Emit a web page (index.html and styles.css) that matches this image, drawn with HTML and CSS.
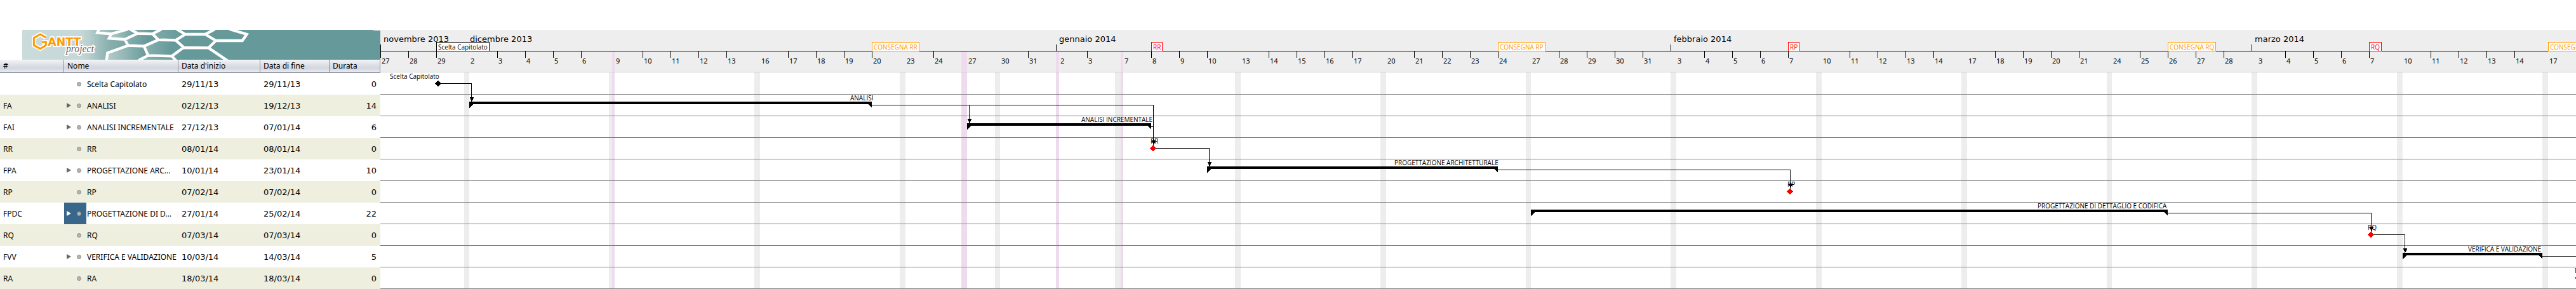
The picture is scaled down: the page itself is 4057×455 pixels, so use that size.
FILE: index.html
```html
<!DOCTYPE html>
<html lang="it">
<head>
<meta charset="utf-8">
<title>GanttProject</title>
<link rel="stylesheet" href="styles.css">
</head>
<body>
<main class="gantt">
  <section class="tasks">
    <svg class="banner" viewBox="105 21 1692 141" preserveAspectRatio="xMinYMin slice" role="img" aria-label="GanttProject">
      <defs>
        <linearGradient id="fade" gradientUnits="userSpaceOnUse" x1="105" y1="0" x2="860" y2="0">
          <stop offset="0" stop-color="#c9dbda"/>
          <stop offset=".42" stop-color="#c5d8d7"/>
          <stop offset=".62" stop-color="#9dbdbc"/>
          <stop offset="1" stop-color="#669999"/>
        </linearGradient>
        <linearGradient id="edge" gradientUnits="userSpaceOnUse" x1="380" y1="0" x2="530" y2="0">
          <stop offset="0" stop-color="#5f9493" stop-opacity="0"/>
          <stop offset="1" stop-color="#5f9493" stop-opacity=".5"/>
        </linearGradient>
        <linearGradient id="cell" x1="0" y1="0" x2="1" y2="0">
          <stop offset="0" stop-color="#b4cdcc"/>
          <stop offset="1" stop-color="#669999"/>
        </linearGradient>
        <linearGradient id="cell2" x1="0" y1="0" x2="1" y2="0">
          <stop offset="0" stop-color="#8ab1b0"/>
          <stop offset=".7" stop-color="#669999"/>
        </linearGradient>
      </defs>
      <rect x="105" y="21" width="1692" height="141" fill="url(#fade)"/>
      <rect x="860" y="21" width="937" height="141" fill="#669999"/>
      <path d="M380 21H465L460 36L525 40L515 62L590 66L605 95L510 130L505 162H380z" fill="url(#edge)"/>
      <path d="M465 21H605L525 40L460 36z" fill="url(#cell)"/>
      <path d="M525 40L600 21L650 38L590 66L515 62z" fill="url(#cell)"/>
      <path d="M605 95L680 98L700 142L660 162H505L510 130z" fill="url(#cell)"/>
      <path d="M590 66L650 38L720 40L748 68L680 98L605 95z" fill="url(#cell2)"/>
      <path d="M620 21H760L720 40L650 38z" fill="url(#cell2)"/>
      <path d="M680 98L748 68L830 70L870 104L805 145L700 142z" fill="url(#cell2)"/>
      <g class="mesh">
        <path d="M468 18L460 35L525 40L605 18M525 40L515 61L590 66L650 38L615 18M650 38L720 40L762 18M720 40L748 68L830 70L868 104L812 145L700 142L680 98L748 68M590 66L605 95L680 98M605 95L508 130L503 165M700 142L655 165M830 70L875 42L835 18M875 42L970 42L1015 18M970 42L1020 72L1145 72L1166 42L1085 18M1020 72L985 106L865 105M985 106L1075 167M812 145L832 167"/>
      </g>
      <path d="M1755 21H1797V24H1772z" fill="#fff"/>
      <path class="mark-halo" d="M217 57L190 42L160 59V94L190 110L217 94V79H198"/>
      <path class="mark" d="M217 57L190 42L160 59V94L190 110L217 94V79H198"/>
      <text class="logo-name" x="226" y="95">ANTT</text>
      <text class="logo-sub" x="312" y="127">project</text>
    </svg>
    <table class="grid">
      <colgroup><col class="c-id"><col class="c-name"><col class="c-start"><col class="c-end"><col class="c-len"></colgroup>
      <thead>
        <tr><th scope="col">#</th><th scope="col">Nome</th><th scope="col">Data d'inizio</th><th scope="col">Data di fine</th><th scope="col">Durata</th></tr>
      </thead>
      <tbody>
        <tr><td></td><td class="name"><div class="node"><span class="tree"><i class="dot"></i></span>Scelta Capitolato</div></td><td class="date">29/11/13</td><td class="date">29/11/13</td><td class="num">0</td></tr>
        <tr><td>FA</td><td class="name"><div class="node"><span class="tree"><button class="toggle" aria-label="Espandi"></button><i class="dot"></i></span>ANALISI</div></td><td class="date">02/12/13</td><td class="date">19/12/13</td><td class="num">14</td></tr>
        <tr><td>FAI</td><td class="name"><div class="node"><span class="tree"><button class="toggle" aria-label="Espandi"></button><i class="dot"></i></span>ANALISI INCREMENTALE</div></td><td class="date">27/12/13</td><td class="date">07/01/14</td><td class="num">6</td></tr>
        <tr><td>RR</td><td class="name"><div class="node"><span class="tree"><i class="dot"></i></span>RR</div></td><td class="date">08/01/14</td><td class="date">08/01/14</td><td class="num">0</td></tr>
        <tr><td>FPA</td><td class="name"><div class="node"><span class="tree"><button class="toggle" aria-label="Espandi"></button><i class="dot"></i></span>PROGETTAZIONE ARC...</div></td><td class="date">10/01/14</td><td class="date">23/01/14</td><td class="num">10</td></tr>
        <tr><td>RP</td><td class="name"><div class="node"><span class="tree"><i class="dot"></i></span>RP</div></td><td class="date">07/02/14</td><td class="date">07/02/14</td><td class="num">0</td></tr>
        <tr><td>FPDC</td><td class="name"><div class="node"><span class="tree selected"><button class="toggle" aria-label="Espandi"></button><i class="dot"></i></span>PROGETTAZIONE DI D...</div></td><td class="date">27/01/14</td><td class="date">25/02/14</td><td class="num">22</td></tr>
        <tr><td>RQ</td><td class="name"><div class="node"><span class="tree"><i class="dot"></i></span>RQ</div></td><td class="date">07/03/14</td><td class="date">07/03/14</td><td class="num">0</td></tr>
        <tr><td>FVV</td><td class="name"><div class="node"><span class="tree"><button class="toggle" aria-label="Espandi"></button><i class="dot"></i></span>VERIFICA E VALIDAZIONE</div></td><td class="date">10/03/14</td><td class="date">14/03/14</td><td class="num">5</td></tr>
        <tr><td>RA</td><td class="name"><div class="node"><span class="tree"><i class="dot"></i></span>RA</div></td><td class="date">18/03/14</td><td class="date">18/03/14</td><td class="num">0</td></tr>
      </tbody>
    </table>
  </section>

  <section class="chart">
    <header class="scale">
      <div class="months">
        <span class="month" style="width:136px">novembre 2013</span>
        <span class="month" style="width:928px">dicembre 2013</span>
        <span class="month" style="width:968px">gennaio 2014</span>
        <span class="month" style="width:915px">febbraio 2014</span>
        <span class="month">marzo 2014</span>
        <span class="flag" style="left:88px">Scelta Capitolato</span>
        <span class="flag due" style="left:774px">CONSEGNA RR</span>
        <span class="flag review" style="left:1214px">RR</span>
        <span class="flag due" style="left:1760px">CONSEGNA RP</span>
        <span class="flag review" style="left:2217px">RP</span>
        <span class="flag due" style="left:2815px">CONSEGNA RQ</span>
        <span class="flag review" style="left:3132px">RQ</span>
        <span class="flag due" style="left:3414px">CONSEGNA RA</span>
      </div>
      <div class="days">
        <span class="day">27</span><span class="day">28</span><span class="day">29</span><i class="off short"></i>
        <span class="day">2</span><span class="day">3</span><span class="day">4</span><span class="day">5</span><span class="day">6</span><i class="off half"></i>
        <span class="day">9</span><span class="day">10</span><span class="day">11</span><span class="day">12</span><span class="day">13</span><i class="off"></i>
        <span class="day">16</span><span class="day">17</span><span class="day">18</span><span class="day">19</span><span class="day">20</span><i class="off"></i>
        <span class="day">23</span><span class="day">24</span><i class="off holiday"></i>
        <span class="day">27</span><i class="off short"></i>
        <span class="day">30</span><span class="day">31</span><i class="off single"></i>
        <span class="day">2</span><span class="day">3</span><i class="off long"></i>
        <span class="day">7</span><span class="day">8</span><span class="day">9</span><span class="day">10</span><i class="off"></i>
        <span class="day">13</span><span class="day">14</span><span class="day">15</span><span class="day">16</span><span class="day">17</span><i class="off"></i>
        <span class="day">20</span><span class="day">21</span><span class="day">22</span><span class="day">23</span><span class="day">24</span><i class="off short"></i>
        <span class="day">27</span><span class="day">28</span><span class="day">29</span><span class="day">30</span><span class="day">31</span><i class="off"></i>
        <span class="day">3</span><span class="day">4</span><span class="day">5</span><span class="day">6</span><span class="day">7</span><i class="off"></i>
        <span class="day">10</span><span class="day">11</span><span class="day">12</span><span class="day">13</span><span class="day">14</span><i class="off"></i>
        <span class="day">17</span><span class="day">18</span><span class="day">19</span><span class="day">20</span><span class="day">21</span><i class="off short"></i>
        <span class="day">24</span><span class="day">25</span><span class="day">26</span><span class="day">27</span><span class="day">28</span><i class="off"></i>
        <span class="day">3</span><span class="day">4</span><span class="day">5</span><span class="day">6</span><span class="day">7</span><i class="off"></i>
        <span class="day">10</span><span class="day">11</span><span class="day">12</span><span class="day">13</span><span class="day">14</span><i class="off"></i>
        <span class="day">17</span>
      </div>
    </header>
    <div class="plot">
      <svg class="layer" aria-hidden="true">
        <g transform="translate(-599 0)" fill="#ededed">
          <rect x="731" width="8" height="100%"/><rect x="959" width="5" height="100%"/>
          <rect x="1188" width="9" height="100%"/><rect x="1417" width="9" height="100%"/>
          <rect x="1567" width="8" height="100%"/><rect x="1756" width="9" height="100%"/>
          <rect x="1945" width="9" height="100%"/><rect x="2174" width="9" height="100%"/>
          <rect x="2403" width="8" height="100%"/><rect x="2631" width="9" height="100%"/>
          <rect x="2860" width="9" height="100%"/><rect x="3089" width="9" height="100%"/>
          <rect x="3318" width="8" height="100%"/><rect x="3546" width="9" height="100%"/>
          <rect x="3775" width="9" height="100%"/><rect x="4004" width="9" height="100%"/>
          <g fill="#eedcee">
            <rect x="964" width="4" height="100%"/><rect x="1514" width="9" height="100%"/>
            <rect x="1663" width="5" height="100%"/><rect x="1765" width="4" height="100%"/>
          </g>
        </g>
      </svg>
      <div class="row"><span class="label" style="left:15px">Scelta Capitolato</span></div>
      <div class="row"><span class="label" style="left:740px">ANALISI</span></div>
      <div class="row"><span class="label" style="left:1104px">ANALISI INCREMENTALE</span></div>
      <div class="row"><span class="label" style="left:1213px">RR</span></div>
      <div class="row"><span class="label" style="left:1597px">PROGETTAZIONE ARCHITETTURALE</span></div>
      <div class="row"><span class="label" style="left:2216px">RP</span></div>
      <div class="row"><span class="label" style="left:2610px">PROGETTAZIONE DI DETTAGLIO E CODIFICA</span></div>
      <div class="row"><span class="label" style="left:3130px">RQ</span></div>
      <div class="row"><span class="label" style="left:3288px">VERIFICA E VALIDAZIONE</span></div>
      <div class="row"><span class="label" style="left:3456px">RA</span></div>
      <svg class="layer" shape-rendering="crispEdges" aria-hidden="true">
        <defs>
          <path id="arrow" d="M-3 0H3V2H2V4H1V6H-1V4H-2V2H-3z"/>
          <path id="stone" d="M0 -5L5 0L0 5L-5 0z"/>
        </defs>
        <g transform="translate(-599 -114)">
          <g class="link">
            <path d="M690 131.5H742.5V160"/>
            <path d="M1373 165.5H1816.5V230M1526.5 165V194"/>
            <path d="M1813 199.5H1816"/>
            <path d="M1816 233.5H1904.5V262"/>
            <path d="M2359 267.5H2819.5V298"/>
            <path d="M3414 335.5H3734.5V366"/>
            <path d="M3734 369.5H3787.5V398"/>
            <path d="M4004 403.5H4060V432"/>
          </g>
          <use href="#arrow" x="742.5" y="153"/><use href="#arrow" x="1526.5" y="187"/>
          <use href="#arrow" x="1816.5" y="221"/><use href="#arrow" x="1904.5" y="255"/>
          <use href="#arrow" x="2819.5" y="289"/><use href="#arrow" x="3734.5" y="357"/>
          <use href="#arrow" x="3787.5" y="391"/>
          <path d="M739 160H1373V170L1367 164H745L739 170z"/>
          <path d="M1523 194H1813V204L1807 198H1529L1523 204z"/>
          <path d="M1901 262H2359V272L2353 266H1907L1901 272z"/>
          <path d="M2411 330H3414V340L3408 334H2417L2411 340z"/>
          <path d="M3784 398H4004V408L3998 402H3790L3784 408z"/>
          <use href="#stone" x="690" y="131.5"/>
          <g fill="#f00">
            <use href="#stone" x="1816" y="233.5"/><use href="#stone" x="2819" y="301.5"/>
            <use href="#stone" x="3734" y="369.5"/><use href="#stone" x="4060" y="437.5"/>
          </g>
        </g>
      </svg>
    </div>
  </section>
</main>
</body>
</html>
```
FILE: styles.css
```css
* { box-sizing: border-box; }

body {
  margin: 0;
  background: #fff;
  color: #000;
  font-family: "Noto Sans", "Open Sans", sans-serif;
  font-size: 12px;
}

.gantt {
  display: flex;
  align-items: flex-start;
  padding-top: 47px;
  overflow: hidden;
}

/* Task list */
.tasks {
  flex: none;
  display: flex;
  flex-direction: column;
}

.banner {
  display: block;
  width: 564px;
  height: 47px;
  margin-left: 35px;
}

.mesh path { fill: none; stroke: #fff; stroke-width: 13; stroke-linejoin: miter; }

.mark-halo { fill: none; stroke: #fff; stroke-width: 20; }

.mark { fill: none; stroke: #ff9900; stroke-width: 9; }

.logo-name {
  font: bold 52px "DejaVu Sans", sans-serif;
  fill: #ff9900;
  stroke: #fff;
  stroke-width: 10px;
  paint-order: stroke;
}

.logo-sub {
  font: italic 47px "Liberation Serif", serif;
  fill: #666;
  stroke: #fff;
  stroke-width: 12px;
  stroke-linejoin: round;
  paint-order: stroke;
}

.grid {
  width: 599px;
  table-layout: fixed;
  border-collapse: separate;
  border-spacing: 0;
}

.c-id { width: 101px; }
.c-name { width: 180px; }
.c-start { width: 129px; }
.c-end { width: 109px; }
.c-len { width: 80px; }

.grid th {
  height: 21px;
  padding: 0 5px;
  border-right: 1px solid #8b8e96;
  border-bottom: 1px solid #70737e;
  background: linear-gradient(#f4f5f7 0%, #dcdee4 45%, #d4d7df 70%, #eceef5 100%);
  font-weight: normal;
  line-height: 16px;
  text-align: left;
  vertical-align: middle;
}

.grid td {
  height: 34px;
  padding: 2px 5px 0;
  line-height: 16px;
  white-space: nowrap;
  vertical-align: middle;
}

.grid tbody tr:nth-child(even) { background: #eeefdf; }

.grid td.name { padding: 0; }

.grid td.date,
.grid td.num { font-family: "DejaVu Sans", sans-serif; font-size: 13px; }

.grid td.num { padding-right: 6px; text-align: right; }

.node {
  display: flex;
  height: 34px;
  line-height: 36px;
}

.tree {
  flex: none;
  display: flex;
  align-items: center;
  justify-content: flex-end;
  gap: 9px;
  width: 35px;
  margin-right: 1px;
  padding-right: 8px;
}

.tree.selected { background: #38678b; }

.toggle {
  width: 7px;
  height: 8px;
  padding: 0;
  border: 0;
  background: #666;
  clip-path: polygon(0 0, 100% 50%, 0 100%);
}

.selected .toggle { background: #fff; }

.dot {
  width: 7px;
  height: 7px;
  border: 1px solid #8c8c8c;
  border-radius: 50%;
  background: #b4b4b4;
}

/* Time scale */
.chart {
  flex: 1;
  min-width: 0;
  overflow: hidden;
}

.scale {
  border-bottom: 1px solid #ccc;
  background: #eee;
}

.months {
  position: relative;
  display: flex;
  height: 34px;
  border-bottom: 1px solid #000;
}

.month {
  flex: none;
  padding: 5px 0 0 5px;
  background: linear-gradient(#000, #000) left bottom / 1px 10px no-repeat;
  font-family: "DejaVu Sans", sans-serif;
  font-size: 13px;
  line-height: 20px;
  white-space: nowrap;
}

.flag {
  position: absolute;
  top: 19px;
  height: 15px;
  padding: 0 2px;
  border: 1px solid;
  background: #fff;
  font: 10px/14px "Open Sans", sans-serif;
  white-space: nowrap;
}

.flag.due { color: #ff9900; }
.flag.review { color: #f00; }

.days {
  display: flex;
  height: 32px;
}

.day {
  flex: none;
  width: 44px;
  padding: 7px 0 0 2px;
  background: linear-gradient(#000, #000) left top / 1px 10px no-repeat;
  font-size: 11px;
  line-height: 16px;
}

.off + .day { background: none; }

.off { flex: none; width: 9px; }
.off.short { width: 8px; }
.off.single { width: 5px; background: #eedcee; }
.off.holiday { background: #eedcee; }
.off.half { background: linear-gradient(#eedcee, #eedcee) right / 4px 100% no-repeat; }
.off.long { width: 13px; background: linear-gradient(#eedcee, #eedcee) right / 4px 100% no-repeat; }

/* Plot */
.plot {
  position: relative;
  padding-top: 1px;
}

.layer {
  position: absolute;
  top: 0;
  left: 0;
  width: 100%;
  height: 100%;
}

.row {
  position: relative;
  height: 34px;
  border-bottom: 1px solid #808080;
}

.label {
  position: absolute;
  top: 0;
  font: 10px/10px "Open Sans", sans-serif;
  white-space: nowrap;
}

.link path { fill: none; stroke: #000; stroke-width: 1; }
```
